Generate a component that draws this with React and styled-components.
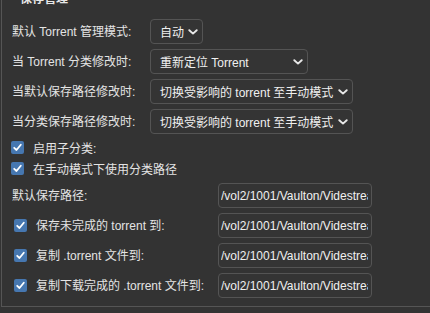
import React from 'react';
import styled, { createGlobalStyle } from 'styled-components';

const Global = createGlobalStyle`
  html, body { margin: 0; padding: 0; background: #333333; overflow: hidden; }
  body {
    font-family: "Liberation Sans", "Noto Sans CJK SC", sans-serif;
    font-size: 12px;
    color: #e4e4e4;
  }
`;

const Fieldset = styled.fieldset`
  margin: -8px 0 0 1px;
  width: 470px;
  box-sizing: border-box;
  border: 1px solid #555555;
  padding: 13px 0 8px 10px;
  min-width: 0;
`;

const Legend = styled.legend`
  margin-left: 6px;
  padding: 0 2px;
  font-weight: bold;
  line-height: 14px;
  color: #e8e8e8;
`;

const OptionGrid = styled.div`
  display: grid;
  grid-template-columns: ${p => p.$labelWidth}px auto;
  grid-auto-rows: 25px;
  row-gap: 5px;
  align-items: center;
  justify-items: start;
  margin-top: ${p => p.$top || 0}px;
`;

const Label = styled.span`
  white-space: nowrap;
  line-height: 14px;
`;

const SelectBox = styled.div`
  box-sizing: border-box;
  width: ${p => p.$width}px;
  height: 25px;
  display: flex;
  align-items: center;
  justify-content: space-between;
  padding: 0 4px 0 9px;
  border: 1px solid #545454;
  border-radius: 4px;
  background: #343434;
  color: #f0f0f0;
  white-space: nowrap;
`;

const Chevron = () => (
  <svg width="10" height="10" viewBox="0 0 10 10">
    <path d="M1.3 3.2 L5 6.6 L8.7 3.2" fill="none" stroke="#e8e8e8" strokeWidth="1.9" strokeLinecap="round" strokeLinejoin="round" />
  </svg>
);

const Select = ({ width, children }) => (
  <SelectBox $width={width}>
    <span>{children}</span>
    <Chevron />
  </SelectBox>
);

const CheckList = styled.div`
  display: flex;
  flex-direction: column;
  margin-top: 5px;
`;

const CheckRow = styled.label`
  display: flex;
  align-items: flex-start;
  height: 21px;
  gap: 9px;
  margin-left: ${p => p.$shift || 0}px;
  white-space: nowrap;
`;

const Box = styled.span`
  flex: none;
  width: 13px;
  height: 13px;
  margin-top: ${p => p.$top || 0}px;
  border-radius: 2px;
  background: #4677b0;
  display: flex;
  align-items: center;
  justify-content: center;
`;

const CheckText = styled.span`
  line-height: 21px;
`;

const Tick = () => (
  <svg width="11" height="11" viewBox="0 0 11 11">
    <path d="M2.2 5.8 L4.5 8 L8.8 2.8" fill="none" stroke="#ffffff" strokeWidth="1.8" strokeLinecap="round" strokeLinejoin="round" />
  </svg>
);

const InlineCheck = styled.div`
  display: flex;
  align-items: center;
  gap: 9px;
  padding-left: 2px;
  white-space: nowrap;
`;

const PathInput = styled.input`
  box-sizing: border-box;
  width: 154px;
  height: 25px;
  padding: 0 3px 0 2px;
  border: 1px solid #545454;
  border-radius: 4px;
  background: #343434;
  color: #f0f0f0;
  font-family: "Liberation Sans", sans-serif;
  font-size: 12px;
  outline: none;
`;

const path = '/vol2/1001/Vaulton/Videstream/Downloads';

const CheckedLabel = ({ children }) => (
  <InlineCheck>
    <Box>
      <Tick />
    </Box>
    <Label>{children}</Label>
  </InlineCheck>
);

export default function App() {
  return (
    <>
      <Global />
      <Fieldset>
        <Legend>保存管理</Legend>
        <OptionGrid $labelWidth={138}>
          <Label>默认 Torrent 管理模式:</Label>
          <Select width={53}>自动</Select>
          <Label>当 Torrent 分类修改时:</Label>
          <Select width={158}>重新定位 Torrent</Select>
          <Label>当默认保存路径修改时:</Label>
          <Select width={203}>切换受影响的 torrent 至手动模式</Select>
          <Label>当分类保存路径修改时:</Label>
          <Select width={203}>切换受影响的 torrent 至手动模式</Select>
        </OptionGrid>
        <CheckList>
          <CheckRow $shift={-1}>
            <Box $top={2}><Tick /></Box>
            <CheckText>启用子分类:</CheckText>
          </CheckRow>
          <CheckRow $shift={-1}>
            <Box $top={2}><Tick /></Box>
            <CheckText>在手动模式下使用分类路径</CheckText>
          </CheckRow>
        </CheckList>
        <OptionGrid $labelWidth={206} $top={2}>
          <Label>默认保存路径:</Label>
          <PathInput readOnly value={path} />
          <CheckedLabel>保存未完成的 torrent 到:</CheckedLabel>
          <PathInput readOnly value={path} />
          <CheckedLabel>复制 .torrent 文件到:</CheckedLabel>
          <PathInput readOnly value={path} />
          <CheckedLabel>复制下载完成的 .torrent 文件到:</CheckedLabel>
          <PathInput readOnly value={path} />
        </OptionGrid>
      </Fieldset>
    </>
  );
}
